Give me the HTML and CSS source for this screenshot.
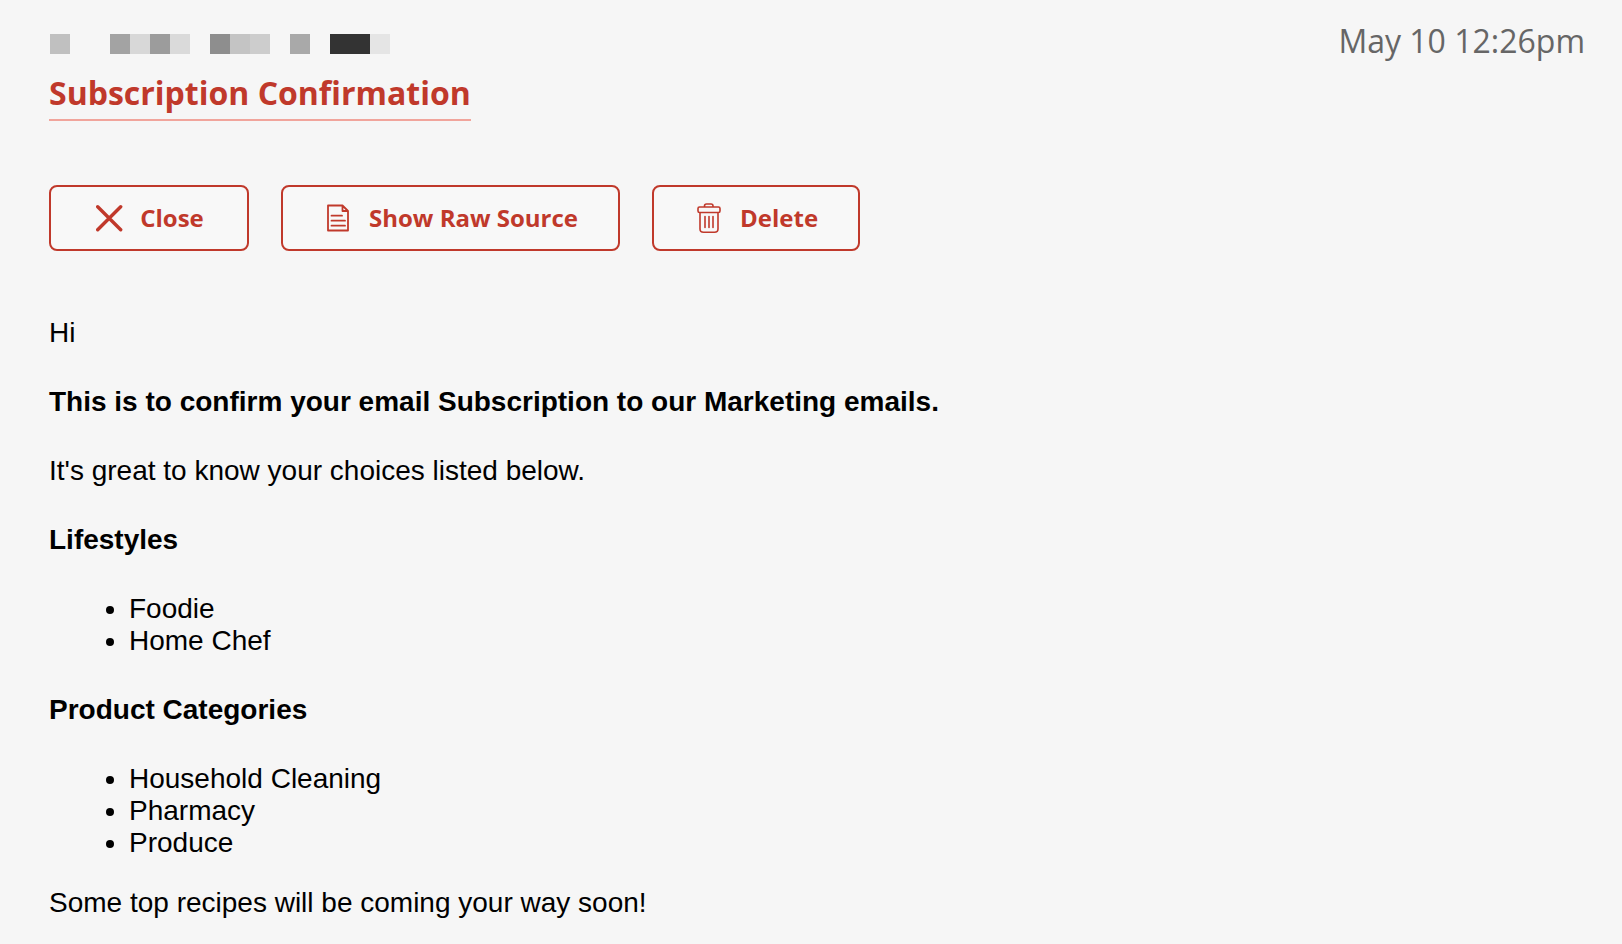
FILE: index.html
```html
<!DOCTYPE html>
<html lang="en">
<head>
<meta charset="utf-8">
<title>Subscription Confirmation</title>
<link rel="stylesheet" href="styles.css">
</head>
<body>
<main class="message">
  <header class="message-header">
    <div class="heading">
      <svg class="sender" width="340" height="20" viewBox="0 0 340 20" shape-rendering="crispEdges" role="img" aria-label="Redacted sender">
        <rect width="20" height="20" fill="#c0c0c0"/>
        <rect x="60" width="20" height="20" fill="#a3a3a3"/>
        <rect x="80" width="20" height="20" fill="#d8d8d8"/>
        <rect x="100" width="20" height="20" fill="#9c9c9c"/>
        <rect x="120" width="20" height="20" fill="#dadada"/>
        <rect x="160" width="20" height="20" fill="#8e8e8e"/>
        <rect x="180" width="20" height="20" fill="#c4c4c4"/>
        <rect x="200" width="20" height="20" fill="#cdcdcd"/>
        <rect x="240" width="20" height="20" fill="#a9a9a9"/>
        <rect x="280" width="40" height="20" fill="#333333"/>
        <rect x="320" width="20" height="20" fill="#e5e5e5"/>
      </svg>
      <h1 class="subject"><a class="subject-link" href="#message">Subscription Confirmation</a></h1>
    </div>
    <time class="date">May 10 12:26pm</time>
  </header>

  <div class="actions">
    <button class="action" type="button">
      <svg class="icon" viewBox="0 0 28 32" aria-hidden="true"><path d="M1.700 4.700l23 23M24.700 4.700l-23 23" stroke-width="3.400"/></svg>
      Close
    </button>
    <button class="action" type="button">
      <svg class="icon" viewBox="0 0 28 32" aria-hidden="true"><path d="M3 3.500H17.500L23 9V28.500H3zM17.500 3.500V9H23M6.500 13.700H17M6.500 18.700H20M6.500 23.700H20" stroke-width="1.800"/></svg>
      Show Raw Source
    </button>
    <button class="action" type="button">
      <svg class="icon" viewBox="0 0 28 32" aria-hidden="true"><path d="M8.500 5V4Q8.500 2 10.500 2H15Q17 2 17 4V5M3.500 5H22.500Q24 5 24 6.500V9Q24 10.500 22.500 10.500H3.500Q2 10.500 2 9V6.500Q2 5 3.500 5zM4 10.500V27Q4 30.300 7.500 30.300H18.500Q22 30.300 22 27V10.500M9 14.500V25.500M13 14.500V25.500M17 14.500V25.500" stroke-width="1.600"/></svg>
      Delete
    </button>
  </div>

  <article class="content" id="message">
    <p class="line">Hi</p>
    <p class="line strong">This is to confirm your email Subscription to our Marketing emails.</p>
    <p class="line">It's great to know your choices listed below.</p>
    <h2 class="line strong">Lifestyles</h2>
    <ul class="choices">
      <li>Foodie</li>
      <li>Home Chef</li>
    </ul>
    <h2 class="line strong">Product Categories</h2>
    <ul class="choices">
      <li>Household Cleaning</li>
      <li>Pharmacy</li>
      <li>Produce</li>
    </ul>
    <p class="closing">Some top recipes will be coming your way soon!</p>
  </article>
</main>
</body>
</html>
```
FILE: styles.css
```css
* {
  box-sizing: border-box;
}

body {
  margin: 0;
  background: #f6f6f6;
  color: #000;
  font-family: "Open Sans", "Noto Sans", sans-serif;
}

.message {
  padding: 19px 37px 0 49px;
}

.message-header {
  display: flex;
  justify-content: space-between;
  align-items: flex-start;
}

.heading {
  padding-top: 15px;
}

.sender {
  display: block;
  margin-left: 1px;
}

.subject {
  margin: 17px 0 0;
  font-size: 32px;
  line-height: 44px;
}

.subject-link {
  display: inline-block;
  padding-bottom: 4px;
  border-bottom: 2px solid #f1a59c;
  color: #c0392b;
  text-decoration: none;
}

.date {
  color: #666;
  font-size: 32px;
  line-height: 44px;
}

.actions {
  display: flex;
  flex-wrap: wrap;
  gap: 32px;
  margin-top: 64px;
}

.action {
  display: inline-flex;
  justify-content: center;
  align-items: center;
  gap: 16px;
  min-width: 200px;
  padding: 14px 40px 14px 42px;
  border: 2px solid #c0392b;
  border-radius: 8px;
  background: #f8f8f8;
  color: #c0392b;
  font: bold 24px/34px "Open Sans", "Noto Sans", sans-serif;
  cursor: pointer;
}

.icon {
  width: 28px;
  height: 32px;
  fill: none;
  stroke: currentColor;
  stroke-linecap: round;
  stroke-linejoin: round;
}

.content {
  padding: 66px 0 16px;
  font: 28px/32px "Liberation Sans", Arial, sans-serif;
}

.line {
  margin: 0 0 37px;
  font-size: 28px;
  font-weight: normal;
}

.strong {
  font-weight: bold;
}

.choices {
  margin: 37px 0 28px;
  padding-left: 80px;
}

.choices + .line {
  margin-top: 37px;
}

.closing {
  margin: 0;
}
```
